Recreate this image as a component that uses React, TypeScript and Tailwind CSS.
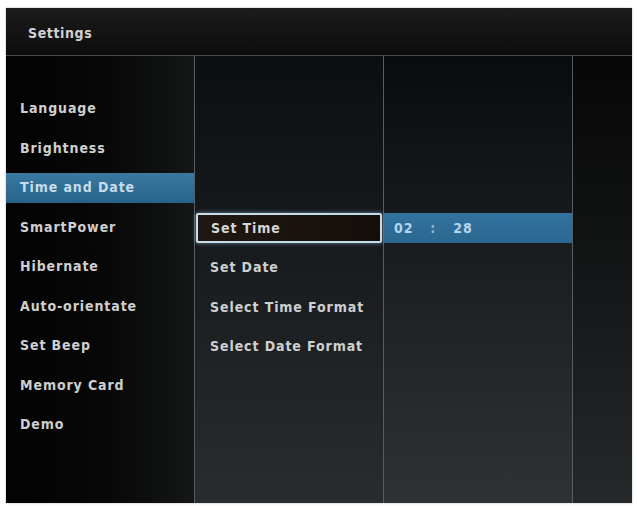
import React from "react";

const FONT = { fontFamily: '"DejaVu Sans Condensed", "DejaVu Sans", sans-serif' };

const MENU = [
  "Language",
  "Brightness",
  "Time and Date",
  "SmartPower",
  "Hibernate",
  "Auto-orientate",
  "Set Beep",
  "Memory Card",
  "Demo",
];

const SUB = ["Set Time", "Set Date", "Select Time Format", "Select Date Format"];

function Row({ children }: { children?: React.ReactNode }) {
  return <div className="h-[39.5px] flex items-center">{children}</div>;
}

export default function App() {
  return (
    <div className="w-[637px] h-[509px] bg-white pt-[8px] pl-[6px]" style={FONT}>
      <div className="w-[626px] h-[495px] flex flex-col bg-[#0a0a0a] shadow-[0_0_2px_rgba(0,0,0,0.3)]">
        {/* header */}
        <div className="h-[48px] flex items-center pl-[22px] pt-[3px] bg-gradient-to-b from-[#1b1b1b] to-[#0d0d0d] border-b border-[#4a4a4a]">
          <span className="text-[14px] font-bold text-[#d2d2d2] tracking-[0.6px]">Settings</span>
        </div>

        <div className="flex flex-1 min-h-0">
          {/* sidebar */}
          <div className="w-[189px] pt-[33px] bg-gradient-to-r from-[#030303] via-[#070707] to-[#141617] border-r border-[#5a5d60]">
            {MENU.map((m) => (
              <Row key={m}>
                {m === "Time and Date" ? (
                  <div className="w-full h-[30px] flex items-center pl-[14px] bg-gradient-to-b from-[#3a7aa2] to-[#28628a]">
                    <span className="text-[14px] font-bold text-[#c6dcea] tracking-[0.9px]">{m}</span>
                  </div>
                ) : (
                  <span className="pl-[14px] text-[14px] font-bold text-[#cfcfcf] tracking-[0.9px]">{m}</span>
                )}
              </Row>
            ))}
          </div>

          {/* sub menu */}
          <div className="w-[189px] pt-[34px] bg-gradient-to-b from-[#0c0f12] via-[#1a1d20] to-[#2a2d30] border-r border-[#5a5d60]">
            <Row />
            <Row />
            <Row />
            {SUB.map((s, i) => (
              <Row key={s}>
                {i === 0 ? (
                  <div className="w-full h-[30px] mx-[1px] flex items-center pl-[13px] rounded-[2px] border-2 border-[#c9dcea] bg-gradient-to-r from-[#1f1712] to-[#140f0c] shadow-[0_0_4px_rgba(150,200,235,0.6)]">
                    <span className="text-[14px] font-bold text-[#d6d6d6] tracking-[0.9px]">{s}</span>
                  </div>
                ) : (
                  <span className="pl-[15px] text-[14px] font-bold text-[#cfcfcf] tracking-[0.9px]">{s}</span>
                )}
              </Row>
            ))}
          </div>

          {/* value column */}
          <div className="w-[189px] pt-[34px] bg-gradient-to-b from-[#090c0e] via-[#1c2022] to-[#2e3235] border-r border-[#5a5d60]">
            <Row />
            <Row />
            <Row />
            <Row>
              <div className="w-full h-[30px] flex items-center gap-[17px] pl-[10px] bg-gradient-to-b from-[#3473a0] to-[#2a6790] text-[14px] font-bold text-[#b6d5ea] tracking-[0.9px]">
                <span>02</span>
                <span className="text-[#8fb7d2]">:</span>
                <span>28</span>
              </div>
            </Row>
          </div>

          {/* right strip */}
          <div className="flex-1 bg-gradient-to-b from-[#070707] via-[#141617] to-[#26292b]" />
        </div>
      </div>
    </div>
  );
}
